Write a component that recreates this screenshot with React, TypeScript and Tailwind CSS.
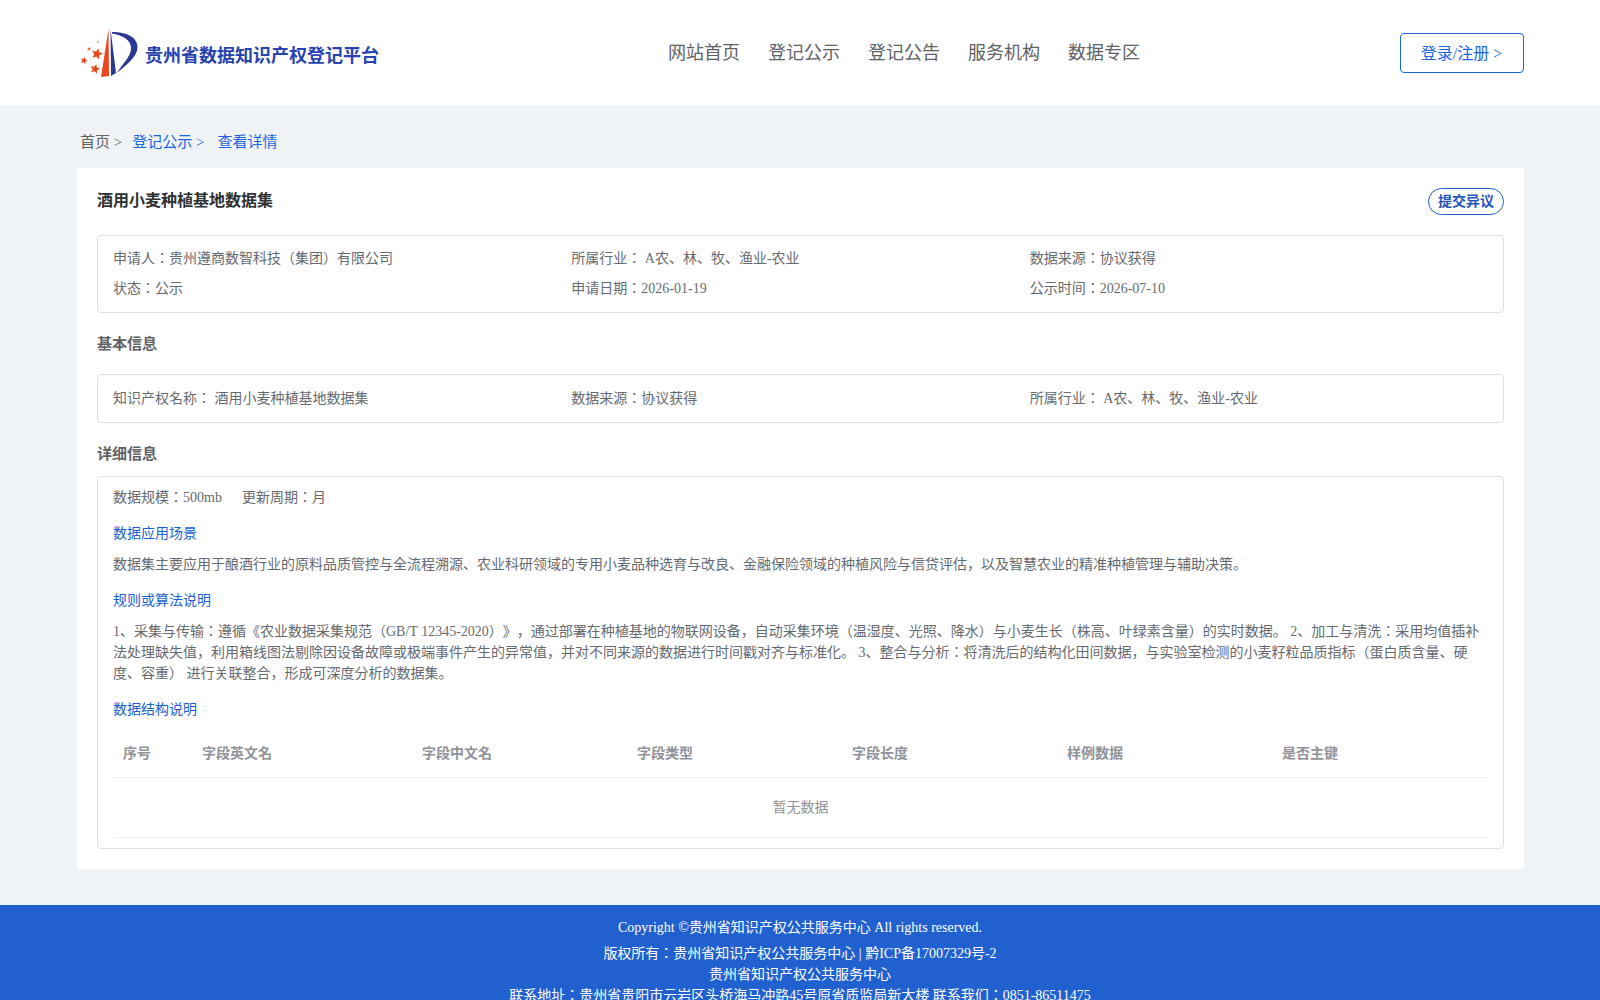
const serif = "font-['Liberation_Serif','Noto_Sans_CJK_JP',serif] [text-spacing-trim:space-all]"

function star(cx: number, cy: number, r: number) {
  const pts: string[] = []
  for (let i = 0; i < 10; i++) {
    const rad = i % 2 === 0 ? r : r * 0.45
    const a = (Math.PI / 5) * i - Math.PI / 2 + 0.25
    pts.push(`${(cx + rad * Math.cos(a)).toFixed(2)},${(cy + rad * Math.sin(a)).toFixed(2)}`)
  }
  return pts.join(" ")
}

function Logo() {
  return (
    <svg width="66" height="56" viewBox="0 0 66 56" className="shrink-0">
      {/* red wedge */}
      <path d="M32.5 4 L33 51 L25 52 Z" fill="#e8481c" />
      {/* blue P */}
      <path d="M34.5 4 L35 51 L40 48 Z" fill="#2a3a94" />
      <path d="M36 7 C50 7 61.5 12 61.5 22 C61.5 32 50 40 41 48 C46 39 55 32 55 23 C55 15 46 10 36 8.5 Z" fill="#2a3a94" />
      {/* stars */}
      <polygon points={star(21, 29, 6)} fill="#e8481c" />
      <polygon points={star(19, 44, 5.2)} fill="#e8481c" />
      <polygon points={star(8, 35.5, 3.8)} fill="#e8481c" />
      <polygon points={star(13, 24, 2.2)} fill="#ee6a40" />
      <circle cx="21.7" cy="16.7" r="1" fill="#f09070" />
    </svg>
  )
}

function InfoBox({ rows, className = "pt-[8px]" }: { rows: string[][]; className?: string }) {
  return (
    <div className={`${className} rounded-[4px] border border-[#dcdfe6] px-[15px] pb-[8px] text-[14px] leading-[30px] text-[#666a70]`}>
      {rows.map((row, i) => (
        <div key={i} className="grid grid-cols-3">
          {row.map((cell) => (
            <div key={cell}>{cell}</div>
          ))}
        </div>
      ))}
    </div>
  )
}

const columns = [
  { label: "序号", width: "w-[79px]" },
  { label: "字段英文名", width: "w-[220px]" },
  { label: "字段中文名", width: "w-[215px]" },
  { label: "字段类型", width: "w-[215px]" },
  { label: "字段长度", width: "w-[215px]" },
  { label: "样例数据", width: "w-[215px]" },
  { label: "是否主键", width: "flex-1" },
]

export default function App() {
  return (
    <div className={`${serif} min-h-screen bg-[#eff3f6]`}>
      {/* Header */}
      <header className="flex h-[105px] items-center justify-between bg-white px-[76px]">
        <div className="flex w-[400px] items-center">
          <Logo />
          <span className="mt-[7px] ml-[3px] text-[18px] font-bold text-[#2643b0]">贵州省数据知识产权登记平台</span>
        </div>
        <nav className="mt-[1px] mr-[68px] flex gap-[28px] text-[18px] leading-[27px] text-[#606266]">
          <a>网站首页</a>
          <a>登记公示</a>
          <a>登记公告</a>
          <a>服务机构</a>
          <a>数据专区</a>
        </nav>
        <button className="h-[40px] w-[124px] rounded-[4px] border border-[#1a66e0] bg-white pt-[2px] pr-[1px] text-[16px] text-[#1a66e0]">
          登录/注册 &gt;
        </button>
      </header>

      <main className="pr-[76px] pl-[77px]">
        {/* Breadcrumb */}
        <div className="flex h-[63px] items-center pt-[12px] pl-[3px] text-[15px] text-[#606266]">
          <span className="mr-[10px]">首页 &gt;</span>
          <span className="mr-[13px] text-[#1a66e0]">登记公示 &gt;</span>
          <span className="text-[#1a66e0]">查看详情</span>
        </div>

        <div className="bg-white p-[20px]">
          <div className="mb-[20px] flex items-start justify-between">
            <h1 className="text-[16px] font-bold leading-[26px] text-[#303133]">酒用小麦种植基地数据集</h1>
            <span className="flex h-[27px] w-[76px] items-center justify-center rounded-[14px] border border-[#1a5fd0] text-[14px] font-bold text-[#1f56b8]">
              提交异议
            </span>
          </div>

          <InfoBox
            rows={[
              ["申请人：贵州遵商数智科技（集团）有限公司", "所属行业： A农、林、牧、渔业-农业", "数据来源：协议获得"],
              ["状态：公示", "申请日期：2026-01-19", "公示时间：2026-07-10"],
            ]}
          />

          <h2 className="mt-[20px] mb-[19px] text-[15px] font-bold leading-[22px] text-[#606266]">基本信息</h2>

          <InfoBox
            className="pt-[9px]"
            rows={[["知识产权名称： 酒用小麦种植基地数据集", "数据来源：协议获得", "所属行业： A农、林、牧、渔业-农业"]]}
          />

          <h2 className="mt-[20px] mb-[11px] text-[15px] font-bold leading-[22px] text-[#606266]">详细信息</h2>

          <div className="rounded-[4px] border border-[#dcdfe6] px-[15px] pt-[10px] pb-[10px] text-[14px] leading-[21px] text-[#666a70]">
            <div className="flex gap-[20px]">
              <span>数据规模：500mb</span>
              <span>更新周期：月</span>
            </div>
            <div className="mt-[15px] text-[#1a5fd0]">数据应用场景</div>
            <p className="mt-[10px]">
              数据集主要应用于酿酒行业的原料品质管控与全流程溯源、农业科研领域的专用小麦品种选育与改良、金融保险领域的种植风险与信贷评估，以及智慧农业的精准种植管理与辅助决策。
            </p>
            <div className="mt-[15px] text-[#1a5fd0]">规则或算法说明</div>
            <p className="mt-[10px]">
              1、采集与传输：遵循《农业数据采集规范（GB/T 12345-2020）》，通过部署在种植基地的物联网设备，自动采集环境（温湿度、光照、降水）与小麦生长（株高、叶绿素含量）的实时数据。 2、加工与清洗：采用均值插补法处理缺失值，利用箱线图法剔除因设备故障或极端事件产生的异常值，并对不同来源的数据进行时间戳对齐与标准化。 3、整合与分析：将清洗后的结构化田间数据，与实验室检测的小麦籽粒品质指标（蛋白质含量、硬度、容重） 进行关联整合，形成可深度分析的数据集。
            </p>
            <div className="mt-[15px] text-[#1a5fd0]">数据结构说明</div>

            {/* Table */}
            <div className="mt-[9px]">
              <div className="flex h-[49px] items-center border-b border-[#ebeef5] font-bold text-[#909399]">
                {columns.map((c) => (
                  <div key={c.label} className={`${c.width} px-[10px]`}>
                    {c.label}
                  </div>
                ))}
              </div>
              <div className="flex h-[60px] items-center justify-center border-b border-[#ebeef5] text-[#909399]">
                暂无数据
              </div>
            </div>
          </div>
        </div>
      </main>

      {/* Footer */}
      <footer className="mt-[36px] bg-[#2161cf] pt-[12px] pb-[10px] text-center text-[14px] leading-[21px] text-white">
        <div className="mb-[5px]">Copyright ©贵州省知识产权公共服务中心 All rights reserved.</div>
        <div>版权所有：贵州省知识产权公共服务中心 | 黔ICP备17007329号-2</div>
        <div>贵州省知识产权公共服务中心</div>
        <div>联系地址：贵州省贵阳市云岩区头桥海马冲路45号原省质监局新大楼 联系我们：0851-86511475</div>
      </footer>
    </div>
  )
}
